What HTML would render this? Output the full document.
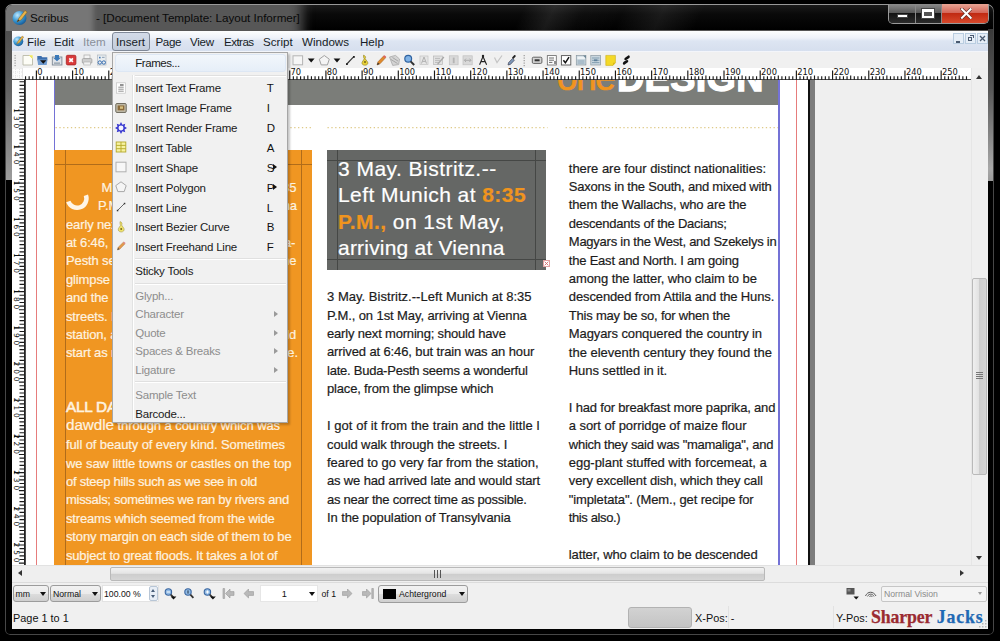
<!DOCTYPE html><html><head><meta charset="utf-8"><title>Scribus</title><style>
*{box-sizing:border-box;margin:0;padding:0}
html,body{width:1000px;height:641px;overflow:hidden;background:#000}
body{position:relative;font-family:"Liberation Sans",sans-serif;font-size:12px;color:#111}
.abs{position:absolute}
#win{position:absolute;left:5px;top:4px;width:989px;height:631px;border-radius:7px 7px 5px 5px;
 background:linear-gradient(115deg,rgba(255,255,255,0) 0,rgba(255,255,255,0) 52%,rgba(255,255,255,.09) 55%,rgba(255,255,255,.02) 58%,rgba(255,255,255,0) 62%,rgba(255,255,255,.07) 66%,rgba(255,255,255,0) 70%) 0 0/989px 27px no-repeat,linear-gradient(180deg,#1c1c1c 0,#0a0a0a 10px,#000 26px,#000 100%);
 box-shadow:inset 0 1px 0 0 rgba(170,170,170,.8),inset 0 0 0 1px rgba(130,130,130,.55)}
#tbline{position:absolute;left:11px;top:29.5px;width:978px;height:1.5px;background:#555}
#winL{position:absolute;left:5.6px;top:29px;width:6.4px;height:151px;background:linear-gradient(180deg,#4e4e4e 0,#626262 40%,#9c9c9c 100%)}
#winR{position:absolute;left:988px;top:29px;width:5.4px;height:152px;background:linear-gradient(180deg,#3a3a3a 0,#585858 40%,#a8a8a8 92%,#9a9a9a 100%)}
#glowbox{position:absolute;left:6px;top:5px;width:320px;height:26px;overflow:hidden;border-radius:6px 0 0 0}#glow1{position:absolute;left:-6px;top:-6px;width:94px;height:38px;background:#767676;filter:blur(2.5px)}
#glow2{position:absolute;left:80px;top:-12px;width:216px;height:50px;background:#575757;filter:blur(6px)}
#title1,#title2{position:absolute;top:10px;font-size:11.7px;letter-spacing:-.05px;color:#0a0a0a;white-space:nowrap;line-height:15px}
#title1{left:30px}#title2{left:96px}
#client{position:absolute;left:12px;top:31px;width:976px;height:598px;background:#f0f0f0;overflow:hidden}
#menubar{position:absolute;left:0;top:0;width:976px;height:21px;background:linear-gradient(180deg,#fdfefe 0,#eef2f9 35%,#dde5f2 50%,#d6dfee 100%);border-bottom:1px solid #f3f5fa}
.mi{position:absolute;top:3.3px;font-size:11.6px;line-height:15px;white-space:nowrap;color:#161c26}
.mi.dis{color:#8a8f99}
#mInsert{position:absolute;left:100px;top:1px;width:38px;height:19px;border:1px solid #7f8897;border-radius:3px;background:linear-gradient(180deg,#d3dbe8,#c3cddc)}
#toolbar{position:absolute;left:0;top:21px;width:976px;height:16px;background:#f0f0f0}
.hruler{position:absolute;left:12px;top:68px}
.vruler{position:absolute;left:12px;top:80px;z-index:2}
.rt{font-family:"DejaVu Sans","Liberation Sans",sans-serif;font-size:8.3px;fill:#111}
#canvas{position:absolute;left:23px;top:80px;width:948px;height:485px;overflow:hidden;background:#efefef}
.ln{position:absolute;white-space:pre;font-size:13px;line-height:18px;color:#1c1c1c;-webkit-text-stroke:.2px currentColor;font-family:"Liberation Sans",sans-serif}
.ln.a{color:#fef3e0}
.ln.h{font-size:21px;line-height:26px;color:#fff}
.ln.h b{color:#f0941e}
.ln .big{font-size:15.3px}.ln b.big{font-weight:normal;-webkit-text-stroke:.6px currentColor;letter-spacing:-.2px}
.sb{position:absolute;background:#f0f0f0}
.st{position:absolute;white-space:nowrap;font-size:12px;line-height:14px;color:#111}
.combo{position:absolute;border:1px solid #9c9c9c;border-radius:3px;background:linear-gradient(180deg,#f2f2f2 0,#ebebeb 50%,#dddddd 51%,#cfcfcf 100%)}
.arr{position:absolute;width:0;height:0;border-left:3px solid transparent;border-right:3px solid transparent;border-top:4px solid #111}
/* popup */
#popup{z-index:5;position:absolute;left:112px;top:52px;width:175.5px;height:371px;background:#f1f1f1;border:1px solid #a6a6a6;box-shadow:2px 2px 2px rgba(0,0,0,.22)}
#popup .gut{position:absolute;left:19px;top:22px;width:2px;height:345px;border-left:1px solid #e2e3e3;border-right:1px solid #fff}
#popup .hl{position:absolute;left:2px;top:1px;width:171px;height:18px;border:1px solid #dde7f4;border-radius:3px;background:linear-gradient(180deg,#f2f6fb,#e6eef8)}
.pi{position:absolute;left:22.3px;font-size:11.5px;letter-spacing:-.22px;line-height:14px;white-space:nowrap;color:#1a1a1a}
.pi.dis{color:#8d8d8d}
.pk{position:absolute;left:153.8px;font-size:11.5px;line-height:14px;color:#111}
.sep{position:absolute;left:22px;width:151px;height:2px;border-top:1px solid #e0e0e0;border-bottom:1px solid #fff}
.sub{position:absolute;left:160.3px;width:0;height:0;border-top:3px solid transparent;border-bottom:3px solid transparent;border-left:4px solid #111}
.sub.dis{border-left-color:#9a9a9a}
.ic{position:absolute}

</style></head><body>
<div id="win"></div><div id="tbline"></div>
<div id="winL"></div><div id="winR"></div>
<div id="glowbox"><div id="glow2"></div><div id="glow1"></div></div>
<svg class="abs" style="left:12px;top:9px" width="17" height="17" viewBox="0 0 17 17"><defs><radialGradient id="gb" cx=".35" cy=".3" r=".8"><stop offset="0" stop-color="#bfe6fb"/><stop offset=".5" stop-color="#3a9ad6"/><stop offset="1" stop-color="#0f4f8c"/></radialGradient></defs><circle cx="7.5" cy="9" r="7" fill="url(#gb)"/><path d="M5 13 L7 9 L13 1.5 L15.2 3 L9.3 10.8 Z" fill="#e8b24a" stroke="#7a5a1a" stroke-width=".5"/><path d="M5 13l1.2-2.6 1.3 1z" fill="#333"/></svg>
<div id="title1">Scribus</div>
<div id="title2">- [Document Template: Layout Informer]</div>
<!-- caption buttons -->
<div class="abs" style="left:888px;top:4px;width:101px;height:20px;border-radius:0 0 5px 5px;border:1px solid #9a9a9a;border-top:none;overflow:hidden;background:#222">
 <div class="abs" style="left:0;top:0;width:27px;height:19px;background:linear-gradient(180deg,#8b8b8b 0,#5a5a5a 45%,#141414 50%,#2c2c2c 100%);border-right:1px solid #888"></div>
 <div class="abs" style="left:27px;top:0;width:26px;height:19px;background:linear-gradient(180deg,#8b8b8b 0,#5a5a5a 45%,#141414 50%,#2c2c2c 100%);border-right:1px solid #888"></div>
 <div class="abs" style="left:53px;top:0;width:47px;height:19px;background:linear-gradient(180deg,#e9a595 0,#d4685a 45%,#c02a12 50%,#d8492c 100%)"></div>
 <div class="abs" style="left:8px;top:10px;width:11px;height:4px;background:#fff;border:1px solid #444;border-radius:1px"></div>
 <div class="abs" style="left:33px;top:4.5px;width:12px;height:9px;border:2px solid #fff;border-top-width:3px;outline:1px solid #444;background:#555"></div>
 <svg class="abs" style="left:70.5px;top:4.2px" width="12.600" height="11" viewBox="0 0 16 14"><path d="M2.5 1.5L13.5 12.5M13.5 1.5L2.5 12.5" stroke="#5a2a22" stroke-width="4.2" stroke-linecap="square"/><path d="M2.5 1.5L13.5 12.5M13.5 1.5L2.5 12.5" stroke="#fff" stroke-width="2.6" stroke-linecap="square"/></svg>
</div>
<div id="client">
 <div id="menubar">
  <svg class="abs" style="left:1px;top:4px" width="12" height="12" viewBox="0 0 17 17"><circle cx="7.5" cy="9" r="7" fill="url(#gb)"/><path d="M5 13 L7 9 L13 1.5 L15.2 3 L9.3 10.8 Z" fill="#e8b24a" stroke="#7a5a1a" stroke-width=".5"/></svg>
  <div id="mInsert"></div>
  <div class="mi" style="left:15px">File</div>
  <div class="mi" style="left:42px">Edit</div>
  <div class="mi dis" style="left:71px">Item</div>
  <div class="mi" style="left:104px">Insert</div>
  <div class="mi" style="left:143.5px;letter-spacing:-.4px">Page</div>
  <div class="mi" style="left:178px;letter-spacing:-.3px">View</div>
  <div class="mi" style="left:212px;letter-spacing:-.55px">Extras</div>
  <div class="mi" style="left:251px">Script</div>
  <div class="mi" style="left:290px">Windows</div>
  <div class="mi" style="left:348px">Help</div>
  <!-- mdi buttons -->
  <div class="abs" style="left:941px;top:2px;width:11px;height:11px;border:1px solid #b9cde0;background:#e6eef7"></div>
  <div class="abs" style="left:953px;top:2px;width:11px;height:11px;border:1px solid #b9cde0;background:#e6eef7"></div>
  <div class="abs" style="left:965px;top:2px;width:11px;height:11px;border:1px solid #b9cde0;background:#e6eef7"></div>
  <div class="abs" style="left:944px;top:10px;width:4px;height:1.5px;background:#4a5a70"></div>
  <div class="abs" style="left:956px;top:6px;width:4px;height:4px;border:1px solid #4a5a70;border-top-width:1.5px"></div>
  <div class="abs" style="left:958px;top:4px;width:4px;height:3px;border:1px solid #4a5a70;border-top-width:1.5px;border-left:none;border-bottom:none"></div>
  <svg class="abs" style="left:967px;top:4px" width="7" height="7" viewBox="0 0 7 7"><path d="M1 1L6 6M6 1L1 6" stroke="#4a5a70" stroke-width="1.3"/></svg>
 </div>
 <div id="toolbar">
<svg class="abs" style="left:0;top:-1px" width="976" height="17" viewBox="12 51 976 17">
<g fill="#9a9a9a"><rect x="14.5" y="55" width="1.2" height="1.2"/><rect x="14.5" y="57.5" width="1.2" height="1.2"/><rect x="14.5" y="60" width="1.2" height="1.2"/><rect x="14.5" y="62.5" width="1.2" height="1.2"/><rect x="14.5" y="65" width="1.2" height="1.2"/></g>
<!-- new -->
<path d="M23 55.5h6.5l3 3v6.5h-9.5z" fill="#fdfdf6" stroke="#b9b9a8" stroke-width=".9"/><path d="M29 55.2h3.6v3.8z" fill="#f3ea5a"/>
<!-- open -->
<path d="M37.3 56h4l1 1.3h5v3h-10z" fill="#3d6fae"/><path d="M37.3 59.5h10.2l-.8 5.5h-8.6z" fill="#6f9bd0"/><path d="M40 60.2h6.5l-3.2 3.6z" fill="#111"/>
<!-- save -->
<rect x="52.3" y="57" width="9.6" height="8" fill="#dfe3e8" stroke="#7c8894" stroke-width=".9"/><path d="M55 55h4v3h1.6l-3.6 3.2-3.6-3.2h1.6z" fill="#3a78b8"/><rect x="54" y="62.4" width="6" height="1.5" fill="#9aa6b2"/>
<!-- close -->
<rect x="66.3" y="55.3" width="9.6" height="9.6" rx="1.4" fill="#d93a3a" stroke="#a82020" stroke-width=".8"/><path d="M69.3 58.3l3.6 3.6m0-3.6l-3.6 3.6" stroke="#fff" stroke-width="1.7"/>
<!-- print -->
<rect x="84" y="55" width="6" height="4" fill="#f4f4f4" stroke="#aaa" stroke-width=".7"/><rect x="82.3" y="58.6" width="9.6" height="4.6" rx="1" fill="#cfcfcf" stroke="#9a9a9a" stroke-width=".7"/><rect x="83.8" y="62" width="6.6" height="3" fill="#f2f2f2" stroke="#aaa" stroke-width=".6"/>
<!-- preflight -->
<rect x="97.5" y="55" width="8.5" height="10" fill="#e9edf0" stroke="#b0b8c0" stroke-width=".7"/><rect x="99" y="56.8" width="1.6" height="1.6" fill="#4a7db8"/><rect x="102" y="56.8" width="2.6" height="1.2" fill="#9ab"/><circle cx="99.8" cy="62.5" r="1.7" fill="none" stroke="#3a6fb0" stroke-width="1"/><circle cx="103.8" cy="62.5" r="1.7" fill="none" stroke="#3a6fb0" stroke-width="1"/>
<!-- shape -->
<rect x="293" y="55.8" width="9.6" height="9" fill="#f6f6f6" stroke="#b4b4b4" stroke-width="1"/>
<path d="M307.8 58.6h6.8l-3.4 3.8z" fill="#111"/>
<path d="M324.3 55.5l5 3.7-1.9 5.7h-6.2l-1.9-5.7z" fill="#f4f4f4" stroke="#a2a2a2" stroke-width="1"/>
<path d="M333.6 58.6h6.8l-3.4 3.8z" fill="#111"/>
<path d="M346.8 64l7-7.4" stroke="#333" stroke-width="1.1"/><rect x="346" y="63.2" width="1.8" height="1.8" fill="#222"/><rect x="353" y="56" width="1.8" height="1.8" fill="#222"/>
<!-- bezier pen -->
<path d="M363.5 55.2c2 .6 2.6 2 1.6 3.4l2.6 3.6c.6 1.6-.6 3-2.8 3s-3.4-1.4-2.8-3l2.2-3.4c-.8-1-.8-2.4-.8-3.6z" fill="#e9d23a" stroke="#8a7a1a" stroke-width=".6"/><circle cx="365" cy="62" r=".9" fill="#6a5a10"/>
<!-- pencil -->
<path d="M377 65l1-3.2 5.8-6 2 1.8-5.8 6.2z" fill="#e08a2c" stroke="#9a5a18" stroke-width=".5"/><path d="M377 65l.8-2.6 1.8 1.6z" fill="#333"/><path d="M383 56.6l1.6-1.4 1.6 1.6-1.4 1.4z" fill="#d66"/>
<!-- rotate (gray) -->
<path d="M389.5 57l6-1.6 4 3.6-.8 5.6-6 .8z" fill="#d4d4d4" stroke="#a8a8a8" stroke-width=".8"/><path d="M391 59.5l6.5 4M392.5 57.5l5.5 3.6" stroke="#9a9a9a" stroke-width=".8"/>
<!-- zoom -->
<circle cx="408.2" cy="58.8" r="3.4" fill="#7fb2e6" stroke="#2f62a0" stroke-width="1.2"/><path d="M410.6 61.4l3.6 3.6" stroke="#333" stroke-width="2"/>
<!-- edit text (gray) -->
<rect x="420" y="56" width="8" height="8.6" fill="#e6e6e6" stroke="#c2c2c2" stroke-width=".7"/><path d="M421.5 63.5l2.5-6.5 2.5 6.5M422.4 61.4h3.2" stroke="#b0b0b0" stroke-width="1" fill="none"/>
<!-- story editor (gray) -->
<rect x="433.5" y="56" width="9" height="8.6" fill="#e2e2e2" stroke="#b8b8b8" stroke-width=".7"/><path d="M435 58.4h5M435 60.4h5M435 62.4h4" stroke="#b0b0b0" stroke-width=".8"/><path d="M437 64l6.4-7.6 1 1-6.4 7.4z" fill="#a8a8a8"/>
<!-- link (gray) -->
<rect x="449.3" y="55.8" width="8.8" height="9" fill="#d9d9d9" stroke="#c0c0c0" stroke-width=".7"/><rect x="452.8" y="57.6" width="1.8" height="5.6" fill="#b4b4b4"/>
<!-- unlink (gray) -->
<rect x="463" y="55.8" width="9.2" height="9" fill="#d9d9d9" stroke="#c0c0c0" stroke-width=".7"/><path d="M464.5 60.3h6.4M466 58.6l-1.6 1.7 1.6 1.7M469.4 58.6l1.6 1.7-1.6 1.7" stroke="#a8a8a8" stroke-width=".9" fill="none"/>
<!-- measure -->
<circle cx="483" cy="56" r="1.2" fill="#222"/><path d="M483 56.5l-3.4 8.3M483 56.5l3.6 8.3M480.6 61.6h5" stroke="#222" stroke-width="1.1" fill="none"/>
<!-- copy props (gray) -->
<path d="M494.5 57.5l2.5 5 5-7" stroke="#c4c4c4" stroke-width="1.2" fill="none"/>
<!-- eyedropper -->
<path d="M508 65l.6-2.400 4-4.200 1.800 1.800-4 4.200z" fill="#7d97b8" stroke="#334" stroke-width=".6"/><path d="M512 57.6l2.2-2.4c.8-.6 2 .4 1.4 1.4l-2.2 2.4z" fill="#222"/>
<g fill="#9a9a9a"><rect x="523.6" y="55" width="1.2" height="1.2"/><rect x="523.6" y="57.5" width="1.2" height="1.2"/><rect x="523.6" y="60" width="1.2" height="1.2"/><rect x="523.6" y="62.5" width="1.2" height="1.2"/><rect x="523.6" y="65" width="1.2" height="1.2"/></g>
<!-- pdf button -->
<rect x="532.3" y="57.2" width="9.6" height="6.2" rx="1.2" fill="#d4d4d4" stroke="#555" stroke-width=".9"/><rect x="534.6" y="59.3" width="5" height="2" fill="#333"/>
<!-- pdf text field -->
<rect x="547.3" y="55.6" width="9" height="9.4" fill="#fcfcfc" stroke="#666" stroke-width=".8"/><path d="M549 58h5M549 60.2h5M549 62.4h3.4" stroke="#444" stroke-width=".8"/><path d="M555 61v3" stroke="#111" stroke-width=".9"/>
<!-- checkbox -->
<rect x="561.4" y="55.6" width="9.4" height="9.4" fill="#fff" stroke="#555" stroke-width=".9"/><path d="M563.4 60.2l2 2.6 3.6-5.6" stroke="#111" stroke-width="1.5" fill="none"/>
<!-- combo -->
<rect x="576.3" y="55.6" width="9.6" height="9.4" fill="#c9d6de" stroke="#8a98a2" stroke-width=".7"/><rect x="577.3" y="56.6" width="7.6" height="2.4" fill="#eef3f6"/><path d="M577.5 61h7M577.5 63h7" stroke="#7c98ac" stroke-width=".8"/><path d="M583 55.4h3v3z" fill="#6f8796"/>
<!-- list -->
<rect x="590.8" y="55.6" width="9.8" height="9.4" fill="#c9d6de" stroke="#8a98a2" stroke-width=".7"/><path d="M592 58h7.4M592 60.3h7.4M592 62.6h7.4" stroke="#7c98ac" stroke-width=".9"/><rect x="594" y="59.4" width="3.4" height="1.8" fill="#5d7f99"/>
<!-- note -->
<path d="M605.8 55.4h9.6v7.4l-2.4 2.6h-7.2z" fill="#f4d928" stroke="#c9ac12" stroke-width=".6"/><path d="M613 65.2v-2.4h2.4z" fill="#d8b818"/>
<!-- link -->
<path d="M628.6 55.2c1.6.4 1.6 2.4 0 3.4l-2.4 1.4c-1.4.8-2.6-.6-1.4-2z" fill="#111"/><path d="M624 65c-1.6-.4-1.6-2.4 0-3.4l2.4-1.4c1.4-.8 2.6.6 1.4 2z" fill="#111"/>
</svg>

 </div>
</div>

<svg class="hruler" width="960" height="12" viewBox="12 68 960 12"><rect x="12" y="68" width="960" height="12" fill="#fff"/><rect x="12" y="68" width="10.6" height="11" fill="#fdfdfd" stroke="#d4d4d4" stroke-width=".6"/><path d="M13 72h9M13 76h9M15.500 69v10M19.500 69v10" stroke="#e0e0e0" stroke-width=".8" stroke-dasharray="1 1"/><path d="M25.54 80V76.20M29.16 80V76.20M32.78 80V76.20M36.40 80V70.50M40.02 80V76.20M43.64 80V76.20M47.26 80V76.20M50.88 80V76.20M54.50 80V75.40M58.11 80V76.20M61.73 80V76.20M65.35 80V76.20M68.97 80V76.20M72.59 80V70.50M76.21 80V76.20M79.83 80V76.20M83.45 80V76.20M87.07 80V76.20M90.69 80V75.40M94.30 80V76.20M97.92 80V76.20M101.54 80V76.20M105.16 80V76.20M108.78 80V70.50M112.40 80V76.20M116.02 80V76.20M119.64 80V76.20M123.26 80V76.20M126.88 80V75.40M130.49 80V76.20M134.11 80V76.20M137.73 80V76.20M141.35 80V76.20M144.97 80V70.50M148.59 80V76.20M152.21 80V76.20M155.83 80V76.20M159.45 80V76.20M163.06 80V75.40M166.68 80V76.20M170.30 80V76.20M173.92 80V76.20M177.54 80V76.20M181.16 80V70.50M184.78 80V76.20M188.40 80V76.20M192.02 80V76.20M195.64 80V76.20M199.26 80V75.40M202.87 80V76.20M206.49 80V76.20M210.11 80V76.20M213.73 80V76.20M217.35 80V70.50M220.97 80V76.20M224.59 80V76.20M228.21 80V76.20M231.83 80V76.20M235.45 80V75.40M239.06 80V76.20M242.68 80V76.20M246.30 80V76.20M249.92 80V76.20M253.54 80V70.50M257.16 80V76.20M260.78 80V76.20M264.40 80V76.20M268.02 80V76.20M271.63 80V75.40M275.25 80V76.20M278.87 80V76.20M282.49 80V76.20M286.11 80V76.20M289.73 80V70.50M293.35 80V76.20M296.97 80V76.20M300.59 80V76.20M304.21 80V76.20M307.82 80V75.40M311.44 80V76.20M315.06 80V76.20M318.68 80V76.20M322.30 80V76.20M325.92 80V70.50M329.54 80V76.20M333.16 80V76.20M336.78 80V76.20M340.40 80V76.20M344.01 80V75.40M347.63 80V76.20M351.25 80V76.20M354.87 80V76.20M358.49 80V76.20M362.11 80V70.50M365.73 80V76.20M369.35 80V76.20M372.97 80V76.20M376.59 80V76.20M380.20 80V75.40M383.82 80V76.20M387.44 80V76.20M391.06 80V76.20M394.68 80V76.20M398.30 80V70.50M401.92 80V76.20M405.54 80V76.20M409.16 80V76.20M412.78 80V76.20M416.39 80V75.40M420.01 80V76.20M423.63 80V76.20M427.25 80V76.20M430.87 80V76.20M434.49 80V70.50M438.11 80V76.20M441.73 80V76.20M445.35 80V76.20M448.97 80V76.20M452.58 80V75.40M456.20 80V76.20M459.82 80V76.20M463.44 80V76.20M467.06 80V76.20M470.68 80V70.50M474.30 80V76.20M477.92 80V76.20M481.54 80V76.20M485.16 80V76.20M488.77 80V75.40M492.39 80V76.20M496.01 80V76.20M499.63 80V76.20M503.25 80V76.20M506.87 80V70.50M510.49 80V76.20M514.11 80V76.20M517.73 80V76.20M521.35 80V76.20M524.97 80V75.40M528.58 80V76.20M532.20 80V76.20M535.82 80V76.20M539.44 80V76.20M543.06 80V70.50M546.68 80V76.20M550.30 80V76.20M553.92 80V76.20M557.54 80V76.20M561.15 80V75.40M564.77 80V76.20M568.39 80V76.20M572.01 80V76.20M575.63 80V76.20M579.25 80V70.50M582.87 80V76.20M586.49 80V76.20M590.11 80V76.20M593.73 80V76.20M597.35 80V75.40M600.96 80V76.20M604.58 80V76.20M608.20 80V76.20M611.82 80V76.20M615.44 80V70.50M619.06 80V76.20M622.68 80V76.20M626.30 80V76.20M629.92 80V76.20M633.53 80V75.40M637.15 80V76.20M640.77 80V76.20M644.39 80V76.20M648.01 80V76.20M651.63 80V70.50M655.25 80V76.20M658.87 80V76.20M662.49 80V76.20M666.11 80V76.20M669.73 80V75.40M673.34 80V76.20M676.96 80V76.20M680.58 80V76.20M684.20 80V76.20M687.82 80V70.50M691.44 80V76.20M695.06 80V76.20M698.68 80V76.20M702.30 80V76.20M705.91 80V75.40M709.53 80V76.20M713.15 80V76.20M716.77 80V76.20M720.39 80V76.20M724.01 80V70.50M727.63 80V76.20M731.25 80V76.20M734.87 80V76.20M738.49 80V76.20M742.11 80V75.40M745.72 80V76.20M749.34 80V76.20M752.96 80V76.20M756.58 80V76.20M760.20 80V70.50M763.82 80V76.20M767.44 80V76.20M771.06 80V76.20M774.68 80V76.20M778.30 80V75.40M781.91 80V76.20M785.53 80V76.20M789.15 80V76.20M792.77 80V76.20M796.39 80V70.50M800.01 80V76.20M803.63 80V76.20M807.25 80V76.20M810.87 80V76.20M814.49 80V75.40M818.10 80V76.20M821.72 80V76.20M825.34 80V76.20M828.96 80V76.20M832.58 80V70.50M836.20 80V76.20M839.82 80V76.20M843.44 80V76.20M847.06 80V76.20M850.68 80V75.40M854.29 80V76.20M857.91 80V76.20M861.53 80V76.20M865.15 80V76.20M868.77 80V70.50M872.39 80V76.20M876.01 80V76.20M879.63 80V76.20M883.25 80V76.20M886.87 80V75.40M890.48 80V76.20M894.10 80V76.20M897.72 80V76.20M901.34 80V76.20M904.96 80V70.50M908.58 80V76.20M912.20 80V76.20M915.82 80V76.20M919.44 80V76.20M923.06 80V75.40M926.67 80V76.20M930.29 80V76.20M933.91 80V76.20M937.53 80V76.20M941.15 80V70.50M944.77 80V76.20M948.39 80V76.20M952.01 80V76.20M955.63 80V76.20M959.25 80V75.40M962.86 80V76.20M966.48 80V76.20" stroke="#1a1a1a" stroke-width="1.15" fill="none"/><text x="37.3" y="75.3" class="rt">0</text><text x="73.5" y="75.3" class="rt">10</text><text x="109.7" y="75.3" class="rt">20</text><text x="145.9" y="75.3" class="rt">30</text><text x="182.1" y="75.3" class="rt">40</text><text x="218.3" y="75.3" class="rt">50</text><text x="254.4" y="75.3" class="rt">60</text><text x="290.6" y="75.3" class="rt">70</text><text x="326.8" y="75.3" class="rt">80</text><text x="363.0" y="75.3" class="rt">90</text><text x="399.2" y="75.3" class="rt">100</text><text x="435.4" y="75.3" class="rt">110</text><text x="471.6" y="75.3" class="rt">120</text><text x="507.8" y="75.3" class="rt">130</text><text x="544.0" y="75.3" class="rt">140</text><text x="580.1" y="75.3" class="rt">150</text><text x="616.3" y="75.3" class="rt">160</text><text x="652.5" y="75.3" class="rt">170</text><text x="688.7" y="75.3" class="rt">180</text><text x="724.9" y="75.3" class="rt">190</text><text x="761.1" y="75.3" class="rt">200</text><text x="797.3" y="75.3" class="rt">210</text><text x="833.5" y="75.3" class="rt">220</text><text x="869.7" y="75.3" class="rt">230</text><text x="905.9" y="75.3" class="rt">240</text><text x="942.0" y="75.3" class="rt">250</text><rect x="12" y="79.2" width="960" height="0.9" fill="#222"/></svg>
<svg class="vruler" width="14" height="485" viewBox="12 80 14 485"><rect x="12" y="80" width="14" height="485" fill="#fff"/><path d="M24.5 81.75H19.50M24.5 85.37H19.50M24.5 88.99H19.50M24.5 92.61H18.90M24.5 96.22H19.50M24.5 99.84H19.50M24.5 103.46H19.50M24.5 107.08H19.50M24.5 110.70H14.00M24.5 114.32H19.50M24.5 117.94H19.50M24.5 121.56H19.50M24.5 125.18H19.50M24.5 128.80H18.90M24.5 132.41H19.50M24.5 136.03H19.50M24.5 139.65H19.50M24.5 143.27H19.50M24.5 146.89H14.00M24.5 150.51H19.50M24.5 154.13H19.50M24.5 157.75H19.50M24.5 161.37H19.50M24.5 164.99H18.90M24.5 168.60H19.50M24.5 172.22H19.50M24.5 175.84H19.50M24.5 179.46H19.50M24.5 183.08H14.00M24.5 186.70H19.50M24.5 190.32H19.50M24.5 193.94H19.50M24.5 197.56H19.50M24.5 201.18H18.90M24.5 204.79H19.50M24.5 208.41H19.50M24.5 212.03H19.50M24.5 215.65H19.50M24.5 219.27H14.00M24.5 222.89H19.50M24.5 226.51H19.50M24.5 230.13H19.50M24.5 233.75H19.50M24.5 237.37H18.90M24.5 240.98H19.50M24.5 244.60H19.50M24.5 248.22H19.50M24.5 251.84H19.50M24.5 255.46H14.00M24.5 259.08H19.50M24.5 262.70H19.50M24.5 266.32H19.50M24.5 269.94H19.50M24.5 273.56H18.90M24.5 277.17H19.50M24.5 280.79H19.50M24.5 284.41H19.50M24.5 288.03H19.50M24.5 291.65H14.00M24.5 295.27H19.50M24.5 298.89H19.50M24.5 302.51H19.50M24.5 306.13H19.50M24.5 309.75H18.90M24.5 313.36H19.50M24.5 316.98H19.50M24.5 320.60H19.50M24.5 324.22H19.50M24.5 327.84H14.00M24.5 331.46H19.50M24.5 335.08H19.50M24.5 338.70H19.50M24.5 342.32H19.50M24.5 345.94H18.90M24.5 349.55H19.50M24.5 353.17H19.50M24.5 356.79H19.50M24.5 360.41H19.50M24.5 364.03H14.00M24.5 367.65H19.50M24.5 371.27H19.50M24.5 374.89H19.50M24.5 378.51H19.50M24.5 382.12H18.90M24.5 385.74H19.50M24.5 389.36H19.50M24.5 392.98H19.50M24.5 396.60H19.50M24.5 400.22H14.00M24.5 403.84H19.50M24.5 407.46H19.50M24.5 411.08H19.50M24.5 414.70H19.50M24.5 418.31H18.90M24.5 421.93H19.50M24.5 425.55H19.50M24.5 429.17H19.50M24.5 432.79H19.50M24.5 436.41H14.00M24.5 440.03H19.50M24.5 443.65H19.50M24.5 447.27H19.50M24.5 450.89H19.50M24.5 454.50H18.90M24.5 458.12H19.50M24.5 461.74H19.50M24.5 465.36H19.50M24.5 468.98H19.50M24.5 472.60H14.00M24.5 476.22H19.50M24.5 479.84H19.50M24.5 483.46H19.50M24.5 487.08H19.50M24.5 490.69H18.90M24.5 494.31H19.50M24.5 497.93H19.50M24.5 501.55H19.50M24.5 505.17H19.50M24.5 508.79H14.00M24.5 512.41H19.50M24.5 516.03H19.50M24.5 519.65H19.50M24.5 523.27H19.50M24.5 526.88H18.90M24.5 530.50H19.50M24.5 534.12H19.50M24.5 537.74H19.50M24.5 541.36H19.50M24.5 544.98H14.00M24.5 548.60H19.50M24.5 552.22H19.50M24.5 555.84H19.50M24.5 559.46H19.50M24.5 563.08H18.90" stroke="#1a1a1a" stroke-width="1.15" fill="none"/><text transform="translate(13.5 108.3) rotate(90)" class="rt" style="letter-spacing:2.9px;font-size:7.4px">130</text><text transform="translate(13.5 144.5) rotate(90)" class="rt" style="letter-spacing:2.9px;font-size:7.4px">140</text><text transform="translate(13.5 180.7) rotate(90)" class="rt" style="letter-spacing:2.9px;font-size:7.4px">150</text><text transform="translate(13.5 216.9) rotate(90)" class="rt" style="letter-spacing:2.9px;font-size:7.4px">160</text><text transform="translate(13.5 253.1) rotate(90)" class="rt" style="letter-spacing:2.9px;font-size:7.4px">170</text><text transform="translate(13.5 289.3) rotate(90)" class="rt" style="letter-spacing:2.9px;font-size:7.4px">180</text><text transform="translate(13.5 325.4) rotate(90)" class="rt" style="letter-spacing:2.9px;font-size:7.4px">190</text><text transform="translate(13.5 361.6) rotate(90)" class="rt" style="letter-spacing:2.9px;font-size:7.4px">200</text><text transform="translate(13.5 397.8) rotate(90)" class="rt" style="letter-spacing:2.9px;font-size:7.4px">210</text><text transform="translate(13.5 434.0) rotate(90)" class="rt" style="letter-spacing:2.9px;font-size:7.4px">220</text><text transform="translate(13.5 470.2) rotate(90)" class="rt" style="letter-spacing:2.9px;font-size:7.4px">230</text><text transform="translate(13.5 506.4) rotate(90)" class="rt" style="letter-spacing:2.9px;font-size:7.4px">240</text><text transform="translate(13.5 542.6) rotate(90)" class="rt" style="letter-spacing:2.9px;font-size:7.4px">250</text><rect x="24" y="80" width="1.8" height="485" fill="#222"/></svg>
<div id="canvas">
<div class="abs" style="left:0;top:0;width:785px;height:485px;background:#fff"></div>
<div class="abs" style="left:785px;top:0;width:2.2px;height:485px;background:#111"></div>
<div class="abs" style="left:787.2px;top:0;width:4.4px;height:485px;background:#7d7d7d"></div>
<div class="abs" style="left:30.6px;top:0;width:1.5px;height:485px;background:#7472d6"></div>
<div class="abs" style="left:755.2px;top:0;width:1.5px;height:485px;background:#7472d6"></div>
<!-- header band -->
<div class="abs" style="left:31.5px;top:0;width:723.5px;height:25.4px;background:#7b7d79;overflow:hidden">
 <div class="abs" style="left:502.5px;top:-22.2px;font-size:37px;line-height:40px;white-space:nowrap;color:#f0941e;letter-spacing:-1.4px;font-weight:normal;-webkit-text-stroke:.7px #f0941e">one</div>
 <div class="abs" style="left:562.5px;top:-21.8px;font-size:37.7px;line-height:40px;white-space:nowrap;color:#fff;font-weight:bold;-webkit-text-stroke:1.3px #fff;letter-spacing:.4px" id="design">DESIGN</div>
</div>
<!-- dotted lines -->
<svg class="abs" style="left:31px;top:46px" width="726" height="3" viewBox="54 126 726 3"><g stroke="#dfca88" stroke-width="1.3" stroke-dasharray="1.3 2.55" fill="none"><path d="M55.500 127.600H312"/><path d="M327.500 127.600H547.500"/><path d="M565.600 127.600H778"/></g></svg>
<!-- orange box -->
<div class="abs" style="left:31px;top:70.3px;width:258px;height:420px;background:#f09622"></div>
<div class="abs" style="left:42.2px;top:70.3px;width:1px;height:420px;background:#b06c1a"></div>
<div class="abs" style="left:278px;top:70.3px;width:1px;height:420px;background:#b06c1a"></div>
<div class="abs" style="left:31.5px;top:83.5px;width:257.5px;height:1px;background:#b06c1a"></div>
<svg class="abs" style="left:42px;top:112px" width="26" height="22" viewBox="65 192 26 22"><path d="M68.3 201.6A9.300 9.300 0 0 0 85.9 195.300" fill="none" stroke="#fff5e6" stroke-width="4.5"/></svg>
<!-- gray box -->
<div class="abs" style="left:304px;top:70.3px;width:218.8px;height:119.6px;background:#656765"></div>
<div class="abs" style="left:314px;top:70.3px;width:1px;height:119.6px;background:#454745"></div>
<div class="abs" style="left:512.1px;top:70.3px;width:1px;height:119.600px;background:#454745"></div>
<div class="abs" style="left:304px;top:80.3px;width:218.8px;height:1px;background:#454745"></div>
<div class="abs" style="left:304px;top:178.6px;width:218.8px;height:1px;background:#454745"></div>
<div class="abs" style="left:519.8px;top:179.800px;width:7.2px;height:7.200px;background:#fff;border:1px solid #e2a2a2"></div>
<svg class="abs" style="left:520.9px;top:180.900px" width="5" height="5" viewBox="0 0 5 5"><path d="M.7 .7L4.300 4.300M4.300 .7L.7 4.300" stroke="#d46a6a" stroke-width=".9"/></svg>
<!-- guides -->
<div class="abs" style="left:13px;top:0;width:1.4px;height:485px;background:#e67c7c"></div>
<div class="abs" style="left:773px;top:0;width:1.4px;height:485px;background:#e67c7c"></div>

<div class="ln b" id="b0" style="left:304px;top:208.2px;letter-spacing:0.030px;">3 May. Bistritz.--Left Munich at 8:35</div>
<div class="ln b" id="b1" style="left:304px;top:226.62px;letter-spacing:-0.093px;">P.M., on 1st May, arriving at Vienna</div>
<div class="ln b" id="b2" style="left:304px;top:245.04px;letter-spacing:-0.180px;">early next morning; should have</div>
<div class="ln b" id="b3" style="left:304px;top:263.46px;letter-spacing:-0.119px;">arrived at 6:46, but train was an hour</div>
<div class="ln b" id="b4" style="left:304px;top:281.88px;letter-spacing:-0.242px;">late. Buda-Pesth seems a wonderful</div>
<div class="ln b" id="b5" style="left:304px;top:300.3px;letter-spacing:-0.171px;">place, from the glimpse which</div>
<div class="ln b" id="b7" style="left:304px;top:337.14px;letter-spacing:0.047px;">I got of it from the train and the little I</div>
<div class="ln b" id="b8" style="left:304px;top:355.56px;letter-spacing:-0.098px;">could walk through the streets. I</div>
<div class="ln b" id="b9" style="left:304px;top:373.98px;letter-spacing:-0.043px;">feared to go very far from the station,</div>
<div class="ln b" id="b10" style="left:304px;top:392.4px;letter-spacing:-0.157px;">as we had arrived late and would start</div>
<div class="ln b" id="b11" style="left:304px;top:410.82px;letter-spacing:-0.247px;">as near the correct time as possible.</div>
<div class="ln b" id="b12" style="left:304px;top:429.24px;letter-spacing:-0.109px;">In the population of Transylvania</div>
<div class="ln c" id="c0" style="left:545.8px;top:79.7px;letter-spacing:-0.021px;">there are four distinct nationalities:</div>
<div class="ln c" id="c1" style="left:545.8px;top:98.09px;letter-spacing:-0.214px;">Saxons in the South, and mixed with</div>
<div class="ln c" id="c2" style="left:545.8px;top:116.48px;letter-spacing:-0.134px;">them the Wallachs, who are the</div>
<div class="ln c" id="c3" style="left:545.8px;top:134.87px;letter-spacing:-0.228px;">descendants of the Dacians;</div>
<div class="ln c" id="c4" style="left:545.8px;top:153.26px;letter-spacing:-0.245px;">Magyars in the West, and Szekelys in</div>
<div class="ln c" id="c5" style="left:545.8px;top:171.65px;letter-spacing:-0.211px;">the East and North. I am going</div>
<div class="ln c" id="c6" style="left:545.8px;top:190.04px;letter-spacing:-0.084px;">among the latter, who claim to be</div>
<div class="ln c" id="c7" style="left:545.8px;top:208.43px;letter-spacing:-0.119px;">descended from Attila and the Huns.</div>
<div class="ln c" id="c8" style="left:545.8px;top:226.82px;letter-spacing:-0.204px;">This may be so, for when the</div>
<div class="ln c" id="c9" style="left:545.8px;top:245.21px;letter-spacing:-0.105px;">Magyars conquered the country in</div>
<div class="ln c" id="c10" style="left:545.8px;top:263.6px;letter-spacing:0.000px;">the eleventh century they found the</div>
<div class="ln c" id="c11" style="left:545.8px;top:281.99px;letter-spacing:-0.080px;">Huns settled in it.</div>
<div class="ln c" id="c13" style="left:545.8px;top:318.77px;letter-spacing:-0.183px;">I had for breakfast more paprika, and</div>
<div class="ln c" id="c14" style="left:545.8px;top:337.16px;letter-spacing:-0.070px;">a sort of porridge of maize flour</div>
<div class="ln c" id="c15" style="left:545.8px;top:355.55px;letter-spacing:-0.267px;">which they said was "mamaliga", and</div>
<div class="ln c" id="c16" style="left:545.8px;top:373.94px;letter-spacing:-0.038px;">egg-plant stuffed with forcemeat, a</div>
<div class="ln c" id="c17" style="left:545.8px;top:392.33px;letter-spacing:-0.133px;">very excellent dish, which they call</div>
<div class="ln c" id="c18" style="left:545.8px;top:410.72px;letter-spacing:-0.128px;">"impletata". (Mem., get recipe for</div>
<div class="ln c" id="c19" style="left:545.8px;top:429.11px;letter-spacing:-0.385px;">this also.)</div>
<div class="ln c" id="c21" style="left:545.8px;top:465.89px;letter-spacing:-0.129px;">latter, who claim to be descended</div>
<div class="ln a" id="a0" style="left:74.8px;top:98.9px;letter-spacing:0.067px;"> May. Bistritz.--Left Munich at 8:35</div>
<div class="ln a" id="a1" style="left:75px;top:117.28px;letter-spacing:-0.113px;">P.M., on 1st May, arriving at Vienna</div>
<div class="ln a" id="a2" style="left:43px;top:135.66px;letter-spacing:-0.135px;">early next morning; should have arrived</div>
<div class="ln a" id="a3" style="left:43px;top:154.04px;letter-spacing:-0.135px;">at 6:46, but train was an hour late. Buda-</div>
<div class="ln a" id="a4" style="left:43px;top:172.42px;letter-spacing:-0.135px;">Pesth seems a wonderful place, from the</div>
<div class="ln a" id="a5" style="left:43px;top:190.8px;letter-spacing:-0.135px;">glimpse which I got of it from the train</div>
<div class="ln a" id="a6" style="left:43px;top:209.18px;letter-spacing:-0.135px;">and the little I could walk through the</div>
<div class="ln a" id="a7" style="left:43px;top:227.56px;letter-spacing:-0.135px;">streets. I feared to go very far from the</div>
<div class="ln a" id="a8" style="left:43px;top:245.94px;letter-spacing:-0.135px;">station, as we had arrived late and would</div>
<div class="ln a" id="a9" style="left:43px;top:264.32px;letter-spacing:-0.135px;">start as near the correct time as possible.</div>
<div class="ln a" id="a12" style="left:43px;top:317.86px;letter-spacing:-0.135px;"><b class="big">ALL DAY LONG</b> we seemed to</div>
<div class="ln a" id="a13" style="left:43px;top:336.24px;letter-spacing:-0.084px;"><span class="big">dawdle</span> through a country which was</div>
<div class="ln a" id="a14" style="left:43px;top:356.22px;letter-spacing:-0.110px;">full of beauty of every kind. Sometimes</div>
<div class="ln a" id="a15" style="left:43px;top:374.6px;letter-spacing:-0.069px;">we saw little towns or castles on the top</div>
<div class="ln a" id="a16" style="left:43px;top:392.98px;letter-spacing:-0.255px;">of steep hills such as we see in old</div>
<div class="ln a" id="a17" style="left:43px;top:411.36px;letter-spacing:-0.284px;">missals; sometimes we ran by rivers and</div>
<div class="ln a" id="a18" style="left:43px;top:429.74px;letter-spacing:-0.179px;">streams which seemed from the wide</div>
<div class="ln a" id="a19" style="left:43px;top:448.12px;letter-spacing:-0.147px;">stony margin on each side of them to be</div>
<div class="ln a" id="a20" style="left:43px;top:466.5px;letter-spacing:-0.178px;">subject to great floods. It takes a lot of</div>
<div class="ln h" id="h0" style="left:315px;top:76.3px;letter-spacing:0.471px;">3 May. Bistritz.--</div>
<div class="ln h" id="h1" style="left:315px;top:102.4px;letter-spacing:0.433px;">Left Munich at <b>8:35</b></div>
<div class="ln h" id="h2" style="left:315px;top:128.5px;letter-spacing:0.446px;"><b>P.M.,</b> on 1st May,</div>
<div class="ln h" id="h3" style="left:315px;top:154.6px;letter-spacing:0.202px;">arriving at Vienna</div>
</div>
<!-- vertical scrollbar -->
<div class="sb" style="left:971px;top:68px;width:17px;height:497px;background:#efefef;border-left:1px solid #e6e6e6"></div>
<div class="abs" style="left:971.5px;top:278px;width:15px;height:197px;border:1px solid #b9b9b9;border-radius:2px;background:linear-gradient(90deg,#efefef 0,#e2e2e2 45%,#cecece 50%,#d4d4d4 100%)"></div>
<div class="abs" style="left:976px;top:371.5px;width:7px;height:1px;background:#777;box-shadow:0 2px 0 #777,0 4px 0 #777,0 6px 0 #777"></div>
<div class="abs" style="left:975.5px;top:75px;width:0;height:0;border-left:3.5px solid transparent;border-right:3.5px solid transparent;border-bottom:4px solid #333"></div>
<div class="abs" style="left:976px;top:555.5px;width:0;height:0;border-left:3.5px solid transparent;border-right:3.5px solid transparent;border-top:4px solid #333"></div>
<!-- horizontal scrollbar -->
<div class="sb" style="left:12px;top:565px;width:976px;height:18px;background:#efefef;border-top:1px solid #e2e2e2;border-bottom:1px solid #dcdcdc"></div>
<div class="abs" style="left:110px;top:566.5px;width:655px;height:14.5px;border:1px solid #b9b9b9;border-radius:2px;background:linear-gradient(180deg,#f2f2f2 0,#e4e4e4 45%,#cdcdcd 50%,#d6d6d6 100%)"></div>
<div class="abs" style="left:434px;top:570px;width:1.4px;height:7.500px;background:#555;box-shadow:3px 0 0 #555,6px 0 0 #555"></div>
<div class="abs" style="left:17.5px;top:569.5px;width:0;height:0;border-top:3.5px solid transparent;border-bottom:3.5px solid transparent;border-right:4.5px solid #333"></div>
<div class="abs" style="left:960px;top:569.5px;width:0;height:0;border-top:3.5px solid transparent;border-bottom:3.5px solid transparent;border-left:4.5px solid #333"></div>
<!-- status row 1 -->
<div class="combo" style="left:13px;top:585px;width:36px;height:17px"></div>
<div class="st" style="left:15.6px;top:587px;font-size:8.7px">mm</div>
<div class="arr" style="left:40px;top:592px"></div>
<div class="combo" style="left:50px;top:585px;width:51px;height:17px"></div>
<div class="st" style="left:52.9px;top:587px;font-size:8.7px">Normal</div>
<div class="arr" style="left:92px;top:592px"></div>
<div class="abs" style="left:101.5px;top:585px;width:57px;height:17px;background:#fff;border:1px solid #e3e3e3"></div>
<div class="st" style="left:104px;top:587px;font-size:8.7px">100.00 %</div>
<div class="abs" style="left:149px;top:586px;width:9px;height:15px;border:1px solid #b8c6d6;border-radius:2px;background:#e8eef6"></div>
<div class="abs" style="left:151px;top:588.5px;width:0;height:0;border-left:2.5px solid transparent;border-right:2.5px solid transparent;border-bottom:3.5px solid #4a5f7a"></div>
<div class="abs" style="left:151px;top:595px;width:0;height:0;border-left:2.5px solid transparent;border-right:2.5px solid transparent;border-top:3.5px solid #4a5f7a"></div>
<svg class="abs" style="left:160px;top:584px" width="220" height="20" viewBox="160 584 220 20">
 <g><circle cx="168.4" cy="592" r="3.2" fill="#8fb9e4" stroke="#3a66a0" stroke-width="1.1"/><path d="M170.8 594.6l2.6 2.8" stroke="#333" stroke-width="1.8"/><path d="M166.8 592h3.2" stroke="#fff" stroke-width="1"/><path d="M170.600 596.400h5.800l-2.900 3.200z" fill="#111"/></g>
 <g><circle cx="188" cy="592" r="3.2" fill="#8fb9e4" stroke="#3a66a0" stroke-width="1.1"/><path d="M190.4 594.6l3 3.2" stroke="#333" stroke-width="1.8"/><path d="M188 590.4v3.2" stroke="#234" stroke-width="1"/></g>
 <g><circle cx="207.4" cy="592" r="3.2" fill="#8fb9e4" stroke="#3a66a0" stroke-width="1.1"/><path d="M209.8 594.6l2.6 2.8" stroke="#333" stroke-width="1.8"/><path d="M205.8 592h3.2M207.4 590.4v3.2" stroke="#fff" stroke-width="1"/><path d="M210 596.400h5.800l-2.900 3.200z" fill="#111"/></g>
 <g fill="#b9b9b9" stroke="#999" stroke-width=".6"><path d="M223 588.5h1.6v10H223z"/><path d="M225.5 593.5l4.5-4.5v2.6h4v3.8h-4v2.6z"/>
 <path d="M244 593.5l4.5-4.5v2.6h5v3.8h-5v2.6z"/>
 <path d="M352 593.5l-4.5-4.5v2.6h-5v3.8h5v2.6z"/>
 <path d="M371 593.5l-4.5-4.5v2.6h-4v3.8h4v2.6z"/><path d="M371.8 588.5h1.6v10h-1.6z"/></g>
</svg>
<div class="abs" style="left:260px;top:585px;width:58px;height:17px;background:#fff;border:1px solid #e6e6e6"></div>
<div class="st" style="left:281.8px;top:587px;font-size:9.2px">1</div>
<div class="arr" style="left:308.500px;top:591.5px;border-left-width:3.5px;border-right-width:3.5px;border-top-width:4.5px"></div>
<div class="st" style="left:321.5px;top:587px;font-size:8.7px">of 1</div>
<div class="combo" style="left:377.5px;top:584.5px;width:90px;height:18px"></div>
<div class="abs" style="left:382.5px;top:589px;width:13px;height:10px;background:#000"></div>
<div class="st" style="left:399px;top:587px;font-size:8.7px">Achtergrond</div>
<div class="arr" style="left:458.5px;top:592px"></div>
<!-- right part -->
<svg class="abs" style="left:845px;top:585px" width="34" height="18" viewBox="845 585 34 18"><rect x="846.5" y="588" width="8" height="6.5" fill="#555"/><rect x="847.5" y="589" width="3" height="2.5" fill="#888"/><path d="M853.5 596.4h5.4l-2.7 3z" fill="#111"/><path d="M865.5 596c2-5 8-5 10.5 0M867.5 596.4c1.4-3 5-3 6.5 0M869.6 596.8c.8-1.4 1.8-1.4 2.6 0" fill="none" stroke="#555" stroke-width="1"/></svg>
<div class="abs" style="left:881px;top:585.5px;width:106px;height:16px;border:1px solid #c6c6c6;border-radius:2px;background:#f4f4f4"></div>
<div class="st" style="left:884px;top:587px;font-size:8.7px;color:#8b8b8b">Normal Vision</div>
<div class="arr" style="left:978px;top:592px;border-top-color:#9a9a9a;border-left-width:2.5px;border-right-width:2.5px;border-top-width:3.5px"></div>
<!-- status row 2 -->
<div class="st" style="left:13px;top:611px;font-size:10.9px">Page 1 to 1</div>
<div class="abs" style="left:627.5px;top:606.5px;width:64px;height:21px;border:1px solid #b2b2b2;border-radius:3px;background:linear-gradient(180deg,#d2d2d2,#c4c4c4)"></div>
<div class="st" style="left:695px;top:611px;font-size:10.9px">X-Pos: -</div>
<div class="st" style="left:836px;top:611px;font-size:10.9px">Y-Pos:</div>
<div class="abs" style="left:871px;top:604.7px;font-family:'Liberation Serif',serif;font-weight:bold;font-size:17.8px;line-height:24px;white-space:nowrap;color:#9b2b31;letter-spacing:-.15px;word-spacing:.6px;-webkit-text-stroke:.25px currentColor" id="sj">Sharper <span style="color:#1f69b4;letter-spacing:.85px">Jacks</span></div>
<svg class="abs" style="left:978px;top:619px" width="10" height="10" viewBox="0 0 10 10"><g fill="#b8b8b8"><rect x="7" y="1" width="1.5" height="1.5"/><rect x="4" y="4" width="1.500" height="1.500"/><rect x="7" y="4" width="1.500" height="1.500"/><rect x="1" y="7" width="1.500" height="1.500"/><rect x="4" y="7" width="1.500" height="1.500"/><rect x="7" y="7" width="1.500" height="1.500"/></g></svg>
<div class="abs" style="left:728px;top:606px;width:1px;height:22px;background:#e2e2e2"></div>
<div class="abs" style="left:833px;top:606px;width:1px;height:22px;background:#e2e2e2"></div>

<div id="popup">
 <div class="gut"></div>
 <div class="hl"></div>
<div class="pi" style="top:3.2px;letter-spacing:-.45px">Frames...</div>
<div class="pi" style="top:28.1px">Insert Text Frame</div>
<div class="pk" style="top:28.1px">T</div>
<svg class="ic" style="left:2.2px;top:28.5px" width="12" height="12" viewBox="0 0 12 12"><rect x="1.500" y=".8" width="9" height="10.400" fill="#fdfdfd" stroke="#c4c4c4" stroke-width=".7"/><path d="M3.300 5.200h5.400M3.300 7.200h5.400M3.300 9.200h5.400" stroke="#666" stroke-width=".7"/><path d="M5 2.200h3.600v1.600H5z" fill="#777"/></svg>
<div class="pi" style="top:48.1px">Insert Image Frame</div>
<div class="pk" style="top:48.1px">I</div>
<svg class="ic" style="left:2.2px;top:48.5px" width="12" height="12" viewBox="0 0 12 12"><rect x=".8" y="1.6" width="10.4" height="8.8" rx="1" fill="#c8c2b0" stroke="#5a5648" stroke-width=".9"/><rect x="2.6" y="3.4" width="6.8" height="5" fill="#8a6a3a"/><rect x="5" y="4.4" width="3" height="2.4" fill="#d8c080"/></svg>
<div class="pi" style="top:68.1px">Insert Render Frame</div>
<div class="pk" style="top:68.1px">D</div>
<svg class="ic" style="left:2.2px;top:68.5px" width="12" height="12" viewBox="0 0 12 12"><g transform="translate(6 6) scale(1.180) translate(-6 -6)"><path d="M6 1l1.200 2.200 2.400-.8-.6 2.400 2.200 1.200-2.200 1.200.6 2.400-2.400-.8L6 11 4.800 8.800l-2.400.8.600-2.400L.8 6l2.200-1.200-.600-2.400 2.400.8z" fill="#3a3ad0"/><circle cx="6" cy="6" r="2.100" fill="#f4f4ff"/></g></svg>
<div class="pi" style="top:87.9px">Insert Table</div>
<div class="pk" style="top:87.9px">A</div>
<svg class="ic" style="left:2.2px;top:88.3px" width="12" height="12" viewBox="0 0 12 12"><rect x="1.2" y="1" width="9.6" height="10" fill="#f7f2a0" stroke="#b4a82a" stroke-width=".9"/><path d="M6 1v10M1.2 4.400h9.600M1.200 7.700h9.600" stroke="#b4a82a" stroke-width=".9"/></svg>
<div class="pi" style="top:107.6px">Insert Shape</div>
<div class="pk" style="top:107.6px">S</div>
<div class="sub" style="top:110.5px"></div>
<svg class="ic" style="left:2.2px;top:108.0px" width="12" height="12" viewBox="0 0 12 12"><rect x="1" y="1.200" width="10" height="9.600" fill="#f7f7f7" stroke="#b0b0b0" stroke-width="1"/></svg>
<div class="pi" style="top:127.6px">Insert Polygon</div>
<div class="pk" style="top:127.6px">P</div>
<div class="sub" style="top:130.5px"></div>
<svg class="ic" style="left:2.2px;top:128.0px" width="12" height="12" viewBox="0 0 12 12"><path d="M6 .8l5.200 3.800-2 6H2.800l-2-6z" fill="#f5f5f5" stroke="#a8a8a8" stroke-width="1"/></svg>
<div class="pi" style="top:147.6px">Insert Line</div>
<div class="pk" style="top:147.6px">L</div>
<svg class="ic" style="left:2.2px;top:148.0px" width="12" height="12" viewBox="0 0 12 12"><path d="M2.500 9.500l7-7" stroke="#444" stroke-width=".8"/><rect x="1.800" y="8.800" width="1.500" height="1.500" fill="#333"/><rect x="8.800" y="1.800" width="1.500" height="1.500" fill="#333"/></svg>
<div class="pi" style="top:167.3px">Insert Bezier Curve</div>
<div class="pk" style="top:167.3px">B</div>
<svg class="ic" style="left:2.2px;top:167.7px" width="12" height="12" viewBox="0 0 12 12"><path d="M5 .6c2 .6 2.600 2 1.600 3.400l2.400 3.600c.6 1.800-.6 3.400-2.800 3.400S2.800 9.400 3.400 7.600l2.200-3.400C4.800 3.200 5 1.800 5 .6z" fill="#efe36a" stroke="#9a8a3a" stroke-width=".5"/><circle cx="6.200" cy="8" r="1" fill="#7a6a20"/></svg>
<div class="pi" style="top:186.9px">Insert Freehand Line</div>
<div class="pk" style="top:186.9px">F</div>
<svg class="ic" style="left:2.2px;top:187.3px" width="12" height="12" viewBox="0 0 12 12"><g transform="translate(1.200 1.200) scale(.8)"><path d="M1.500 11l1-3.400 6.400-6.400 2.200 2-6.400 6.600z" fill="#e29a4c" stroke="#a86a28" stroke-width=".5"/><path d="M1.500 11l.8-2.700 1.900 1.700z" fill="#555"/><path d="M8.300 1.800l1.400-1.200 2 1.800-1.300 1.400z" fill="#d88"/></g></svg>
<div class="pi" style="top:211.3px">Sticky Tools</div>
<div class="pi dis" style="top:235.8px">Glyph...</div>
<div class="pi dis" style="top:254.1px">Character</div>
<div class="sub dis" style="top:258.3px;left:161px"></div>
<div class="pi dis" style="top:272.6px">Quote</div>
<div class="sub dis" style="top:276.8px;left:161px"></div>
<div class="pi dis" style="top:291.1px">Spaces &amp; Breaks</div>
<div class="sub dis" style="top:295.3px;left:161px"></div>
<div class="pi dis" style="top:309.8px">Ligature</div>
<div class="sub dis" style="top:314.0px;left:161px"></div>
<div class="pi dis" style="top:334.5px">Sample Text</div>
<div class="pi" style="top:353.5px">Barcode...</div>
<div class="sep" style="top:21.5px"></div>
<div class="sep" style="top:205.0px"></div>
<div class="sep" style="top:230.0px"></div>
<div class="sep" style="top:327.5px"></div>
</div>

</body></html>
